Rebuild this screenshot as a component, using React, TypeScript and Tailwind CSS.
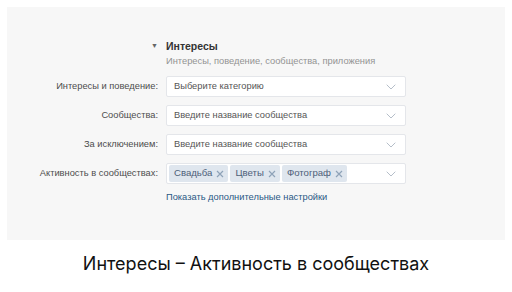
import React from "react";

function Chevron() {
  return (
    <svg width="10" height="6" viewBox="0 0 10 6" fill="none">
      <path d="M0.7 0.7L5 5l4.3-4.3" stroke="#b5bec9" strokeWidth="1" />
    </svg>
  );
}

function Cross() {
  return (
    <svg width="8" height="8" viewBox="0 0 8 8" fill="none">
      <path d="M1 1l6 6M7 1L1 7" stroke="#8fa3b8" strokeWidth="1.2" />
    </svg>
  );
}

function Row({ label, children }: { label: string; children: React.ReactNode }) {
  return (
    <div className="flex items-center">
      <div className="w-[159px] pr-[8px] text-right text-[9.3px] text-[#4d4d4d]">{label}</div>
      <div className="flex h-[21px] w-[240px] items-center justify-between rounded-[2px] border border-[#e4e6ea] bg-white pl-[7px] pr-[9px]">
        {children}
        <Chevron />
      </div>
    </div>
  );
}

function Tag({ text }: { text: string }) {
  return (
    <div className="flex h-[17px] items-center gap-[4px] rounded-[2px] bg-[#dfe6ee] pl-[5px] pr-[4px] text-[9.6px] text-[#4d6079]">
      <span>{text}</span>
      <Cross />
    </div>
  );
}

export default function App() {
  return (
    <div className="h-[292px] w-[512px] bg-white" style={{ fontFamily: "'Liberation Sans', Arial, sans-serif" }}>
      <div className="pt-[7px] px-[7px]">
        <div className="flex h-[233px] flex-col bg-[#f7f7f7] pt-[32px]">
          <div className="flex items-center leading-[14px]">
            <div className="w-[159px] pr-[8px] text-right text-[7px] text-[#666]">▼</div>
            <div className="text-[10.5px] font-bold text-[#333]">Интересы</div>
          </div>
          <div className="ml-[159px] mt-[1px] text-[9.3px] leading-[14px] text-[#939393]">Интересы, поведение, сообщества, приложения</div>
          <div className="mt-[8px] flex flex-col gap-[8px]">
            <Row label="Интересы и поведение:">
              <span className="text-[9.3px] text-[#555]">Выберите категорию</span>
            </Row>
            <Row label="Сообщества:">
              <span className="text-[9.3px] text-[#555]">Введите название сообщества</span>
            </Row>
            <Row label="За исключением:">
              <span className="text-[9.3px] text-[#555]">Введите название сообщества</span>
            </Row>
            <Row label="Активность в сообществах:">
              <div className="-ml-[5px] flex gap-[2px]">
                <Tag text="Свадьба" />
                <Tag text="Цветы" />
                <Tag text="Фотограф" />
              </div>
            </Row>
          </div>
          <div className="ml-[159px] mt-[6px] text-[9.3px] leading-[14px] text-[#2a5885]">Показать дополнительные настройки</div>
        </div>
      </div>
      <div className="mt-[12px] text-center text-[18px] leading-[24px] text-[#111]" style={{ fontFamily: "Inter, sans-serif" }}>
        Интересы – Активность в сообществах
      </div>
    </div>
  );
}
